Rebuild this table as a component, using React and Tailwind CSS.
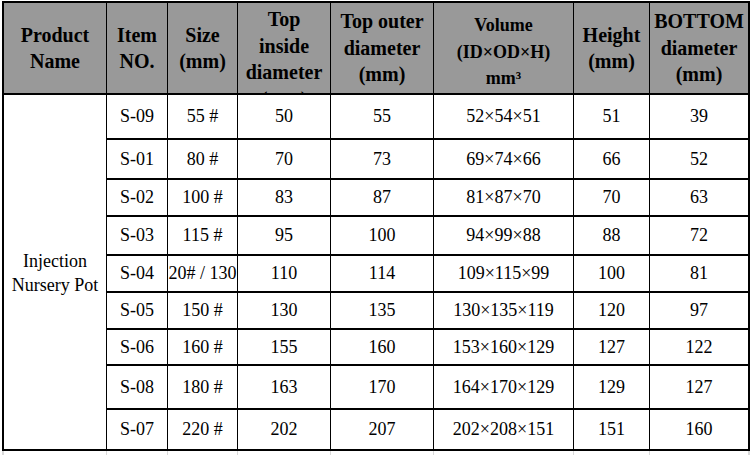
import React from 'react'

const headers = [
  { lines: ['Product', 'Name'] },
  { lines: ['Item', 'NO.'] },
  { lines: ['Size', '(mm)'] },
  { lines: ['Top', 'inside', 'diameter', '(mm)'], top: true },
  { lines: ['Top outer', 'diameter', '(mm)'] },
  { lines: ['Volume', '(ID×OD×H)', 'mm³'], small: true },
  { lines: ['Height', '(mm)'] },
  { lines: ['BOTTOM', 'diameter', '(mm)'] },
]

const rows = [
  ['S-09', '55 #', '50', '55', '52×54×51', '51', '39'],
  ['S-01', '80 #', '70', '73', '69×74×66', '66', '52'],
  ['S-02', '100 #', '83', '87', '81×87×70', '70', '63'],
  ['S-03', '115 #', '95', '100', '94×99×88', '88', '72'],
  ['S-04', '20# / 130', '110', '114', '109×115×99', '100', '81'],
  ['S-05', '150 #', '130', '135', '130×135×119', '120', '97'],
  ['S-06', '160 #', '155', '160', '153×160×129', '127', '122'],
  ['S-08', '180 #', '163', '170', '164×170×129', '129', '127'],
  ['S-07', '220 #', '202', '207', '202×208×151', '151', '160'],
]

const cols = 'grid-cols-[102px_60px_69px_92px_102px_139px_75px_98px]'

export default function App() {
  return (
    <div
      className="w-[752px] h-[455px] bg-white overflow-hidden pt-px pl-[2px] text-black"
      style={{ fontFamily: '"Liberation Serif", "Times New Roman", serif' }}
    >
      {/* spreadsheet table */}
      <div
        className={`grid w-fit ${cols} grid-rows-[90px_43px_38px_35px_37px_35px_35px_34px_42px_39px] gap-x-px gap-y-[2px] p-[2px] bg-black`}
      >
        {headers.map((h, i) => (
          <div
            key={i}
            className={`bg-[#999999] flex flex-col items-center overflow-hidden whitespace-nowrap font-bold leading-[26.5px] ${
              h.top ? 'justify-start pt-[3px]' : 'justify-center'
            } ${h.small ? 'text-[18px] pt-[8px]' : 'text-[20px]'}`}
          >
            {h.lines.map((l) => (
              <span key={l}>{l}</span>
            ))}
          </div>
        ))}

        <div className="row-span-9 bg-white flex flex-col items-center justify-center text-[18px] leading-[24.5px] pt-[2px]">
          <span>Injection</span>
          <span>Nursery Pot</span>
        </div>

        {rows.map((r) =>
          r.map((c, j) => (
            <div
              key={r[0] + j}
              className="bg-white flex items-center justify-center overflow-hidden whitespace-nowrap text-[18px]"
            >
              {c}
            </div>
          ))
        )}
      </div>

      {/* faint sheet gridlines under the table */}
      <div className={`grid w-fit ${cols} gap-x-px px-[2px] h-[4px] bg-[#d9d9d9]`}>
        {Array.from({ length: 8 }).map((_, i) => (
          <div key={i} className="bg-white" />
        ))}
      </div>
    </div>
  )
}
